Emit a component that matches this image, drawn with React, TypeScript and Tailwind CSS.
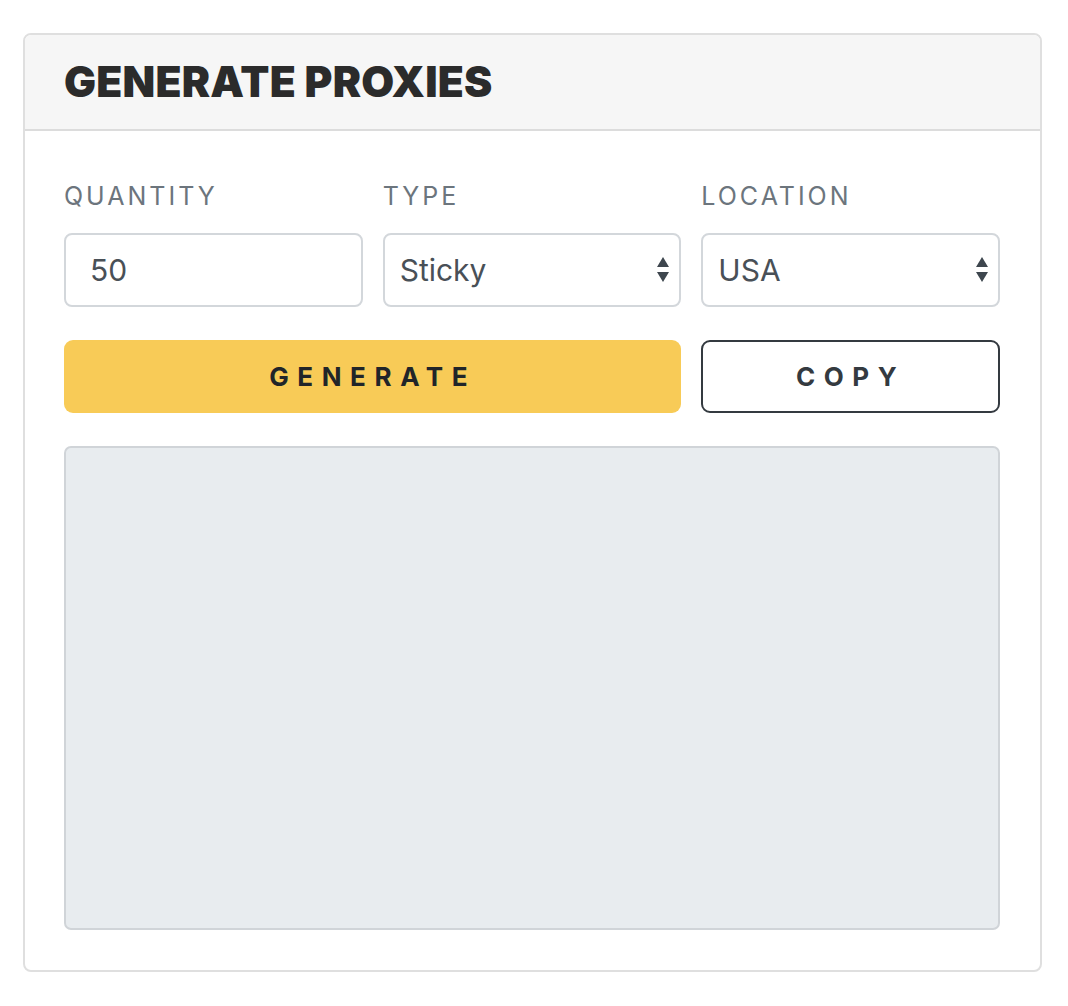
import { useState } from 'react';

const FONT = { fontFamily: 'Inter, "Noto Sans", "Liberation Sans", sans-serif' };

function Arrows() {
  return (
    <svg
      className="pointer-events-none absolute right-[11px] top-1/2 -translate-y-1/2"
      width="14"
      height="28"
      viewBox="0 0 14 28"
    >
      <path d="M7 1 L13 11 L1 11 Z" fill="#3e464e" />
      <path d="M1 16 L13 16 L7 26 Z" fill="#3e464e" />
    </svg>
  );
}

export default function App() {
  const [qty, setQty] = useState('50');
  const [type, setType] = useState('Sticky');
  const [loc, setLoc] = useState('USA');

  const fieldCls =
    'h-[74px] w-full rounded-[8px] border-2 border-[#d3d7db] bg-white text-[30px] text-[#495057] outline-none';

  return (
    <div className="min-h-screen bg-white pl-[23px] pt-[33px]" style={FONT}>
      <div className="w-[1019px] overflow-hidden rounded-[8px] border-2 border-[#dfdfdf] bg-white">
        {/* Header */}
        <div className="flex h-[96px] items-center border-b-2 border-[#dcdcdc] bg-[#f6f6f6] px-[39px]">
          <h1 className="text-[42.5px] font-black tracking-[0.2px] text-[#2b2b2b]">GENERATE PROXIES</h1>
        </div>

        {/* Body */}
        <div className="pb-[40px] pl-[39px] pr-[40px] pt-[46px]">
          <div className="grid grid-cols-3 gap-x-[20px]">
            <label className="flex h-[40px] items-center text-[25px] uppercase tracking-[3px] text-[#6c757d]">
              Quantity
            </label>
            <label className="flex h-[40px] items-center text-[25px] uppercase tracking-[3px] text-[#6c757d]">
              Type
            </label>
            <label className="flex h-[40px] items-center text-[25px] uppercase tracking-[3px] text-[#6c757d]">
              Location
            </label>

            <div className="mt-[16px]">
              <input className={fieldCls + ' pl-[24px]'} value={qty} onChange={(e) => setQty(e.target.value)} />
            </div>
            <div className="relative mt-[16px]">
              <select
                className={fieldCls + ' appearance-none pl-[15px]'}
                value={type}
                onChange={(e) => setType(e.target.value)}
              >
                <option>Sticky</option>
                <option>Rotating</option>
              </select>
              <Arrows />
            </div>
            <div className="relative mt-[16px]">
              <select
                className={fieldCls + ' appearance-none pl-[15px]'}
                value={loc}
                onChange={(e) => setLoc(e.target.value)}
              >
                <option>USA</option>
                <option>UK</option>
                <option>Canada</option>
              </select>
              <Arrows />
            </div>

            <button className="col-span-2 mt-[33px] h-[73px] rounded-[9px] bg-[#f8cb57] text-[26px] font-bold tracking-[8.6px] text-[#212529]">
              GENERATE
            </button>
            <button className="mt-[33px] h-[73px] rounded-[9px] border-2 border-[#343a40] bg-white text-[26px] font-bold tracking-[8.6px] text-[#343a40]">
              COPY
            </button>

            <textarea
              className="col-span-3 mt-[33px] h-[484px] w-full resize-none rounded-[7px] border-2 border-[#d0d4d8] bg-[#e8ecef] outline-none"
              readOnly
            />
          </div>
        </div>
      </div>
    </div>
  );
}
